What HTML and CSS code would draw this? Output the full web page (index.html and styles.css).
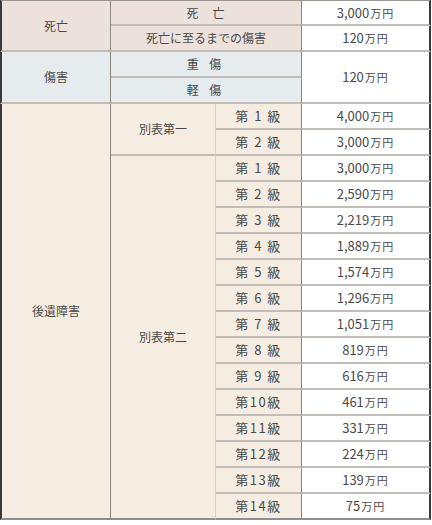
FILE: index.html
```html
<!DOCTYPE html>
<html lang="ja">
<head>
<meta charset="utf-8">
<link rel="stylesheet" href="styles.css">
</head>
<body>
<table class="t">
  <colgroup>
    <col class="c1"><col class="c2"><col class="c3"><col class="c4">
  </colgroup>
  <tr class="first">
    <td class="h1 death" rowspan="2">死亡</td>
    <td class="h2 death sp" colspan="2">死　亡</td>
    <td class="v">3,000<span class="u">万円</span></td>
  </tr>
  <tr>
    <td class="h2 death" colspan="2">死亡に至るまでの傷害</td>
    <td class="v">120<span class="u">万円</span></td>
  </tr>
  <tr>
    <td class="h1 injury" rowspan="2">傷害</td>
    <td class="h2 injury sp2" colspan="2">重 傷</td>
    <td class="v" rowspan="2">120<span class="u">万円</span></td>
  </tr>
  <tr>
    <td class="h2 injury sp2" colspan="2">軽 傷</td>
  </tr>
  <tr>
    <td class="h1 after last" rowspan="16">後遺障害</td>
    <td class="h2 after mid" rowspan="2">別表第一</td>
    <td class="g after">第 1 級</td>
    <td class="v">4,000<span class="u">万円</span></td>
  </tr>
  <tr>
    <td class="g after">第 2 級</td>
    <td class="v">3,000<span class="u">万円</span></td>
  </tr>
  <tr>
    <td class="h2 after mid last" rowspan="14">別表第二</td>
    <td class="g after">第 1 級</td>
    <td class="v">3,000<span class="u">万円</span></td>
  </tr>
  <tr><td class="g after">第 2 級</td><td class="v">2,590<span class="u">万円</span></td></tr>
  <tr><td class="g after">第 3 級</td><td class="v">2,219<span class="u">万円</span></td></tr>
  <tr><td class="g after">第 4 級</td><td class="v">1,889<span class="u">万円</span></td></tr>
  <tr><td class="g after">第 5 級</td><td class="v">1,574<span class="u">万円</span></td></tr>
  <tr><td class="g after">第 6 級</td><td class="v">1,296<span class="u">万円</span></td></tr>
  <tr><td class="g after">第 7 級</td><td class="v">1,051<span class="u">万円</span></td></tr>
  <tr><td class="g after">第 8 級</td><td class="v">819<span class="u">万円</span></td></tr>
  <tr><td class="g after">第 9 級</td><td class="v">616<span class="u">万円</span></td></tr>
  <tr><td class="g after">第10級</td><td class="v">461<span class="u">万円</span></td></tr>
  <tr><td class="g after">第11級</td><td class="v">331<span class="u">万円</span></td></tr>
  <tr><td class="g after">第12級</td><td class="v">224<span class="u">万円</span></td></tr>
  <tr><td class="g after">第13級</td><td class="v">139<span class="u">万円</span></td></tr>
  <tr><td class="g after last">第14級</td><td class="v last">75<span class="u">万円</span></td></tr>
</table>
</body>
</html>
```
FILE: styles.css
```css
html, body {
  margin: 0;
  padding: 0;
  background: #ffffff;
}

.t {
  border-collapse: separate;
  border-spacing: 0;
  width: 431px;
  table-layout: fixed;
  font-family: "Noto Sans CJK JP", "Noto Sans", sans-serif;
  color: #4a4a4a;
  font-size: 12px;
}

.c1 { width: 111px; }
.c2 { width: 105px; }
.c3 { width: 86px; }
.c4 { width: 129px; }

.t tr { height: 26px; }

.t td {
  padding: 0;
  line-height: 18px;
  text-align: center;
  border-bottom: 2px solid #c2bdb8;
  white-space: nowrap;
  vertical-align: middle;
}

.t tr.first td { border-top: 1px solid #9a9692; }

.h1 {
  border-left: 2px solid #3a3a3a;
  border-right: 1px solid #8a857f;
}

.h2 { border-right: 1px solid #8a857f; }

.h2.mid { border-right: 1px solid #d9d2c8; }

.g {
  border-right: 1px solid #8a857f;
  font-size: 13px;
  letter-spacing: 1.5px;
}

.death { background: #ede1dc; }
.injury { background: #e6ebee; }
.after { background: #f5ede2; }

.sp { letter-spacing: 1px; }
.sp2 { letter-spacing: 4px; padding-left: 4px; }

.v {
  background: #ffffff;
  text-align: right;
  padding-right: 26px;
  border-right: 2px solid #3a3a3a;
  border-bottom-color: #c8c8c8;
  font-size: 13px;
}

.u {
  font-size: 11px;
  line-height: 1;
  letter-spacing: 1px;
  margin-left: 1px;
}

.t td.last { border-bottom: 2px solid #8e8e8e; }
```
